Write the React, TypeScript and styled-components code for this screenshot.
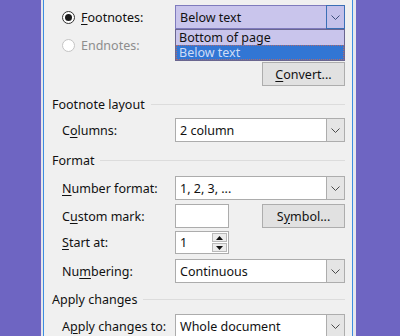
import React from 'react';
import styled, { createGlobalStyle } from 'styled-components';

const GlobalStyle = createGlobalStyle`
  html, body { margin: 0; padding: 0; }
  body {
    background: #6e65c2;
    font-family: 'Noto Sans', 'Open Sans', sans-serif;
    font-size: 12.5px;
    color: #111;
  }
`;

const Page = styled.div`
  width: 400px;
  height: 336px;
  overflow: hidden;
  background: #6e65c2;
  padding-left: 41px;
  box-sizing: border-box;
`;

const Frame = styled.div`
  width: 315px;
  height: 336px;
  box-sizing: border-box;
  background: #e6e6ec;
  padding: 0 3px 0 2px;
`;

const Body = styled.div`
  height: 100%;
  box-sizing: border-box;
  background: #f0f0f0;
  border-left: 1px solid #3d8ee0;
  border-right: 1px solid #3d8ee0;
  padding: 5px 7px 0 8px;
`;

const Row = styled.div<{ $h?: number; $mt?: number }>`
  display: grid;
  grid-template-columns: 113px 170px;
  align-items: center;
  height: ${(p) => p.$h ?? 24}px;
  margin-top: ${(p) => p.$mt ?? 0}px;
  padding-left: 10px;
`;

const Label = styled.span<{ $disabled?: boolean }>`
  white-space: nowrap;
  color: ${(p) => (p.$disabled ? '#8d8d8d' : '#111')};
  u { text-decoration: underline; text-underline-offset: 2px; }
`;

const RadioLabel = styled.label`
  display: flex;
  align-items: center;
  gap: 6px;
`;

const Radio = styled.span<{ $checked?: boolean; $disabled?: boolean }>`
  width: 13px;
  height: 13px;
  box-sizing: border-box;
  border-radius: 50%;
  background: #fff;
  border: 1px solid ${(p) => (p.$disabled ? '#c4c4c4' : '#333')};
  display: inline-flex;
  align-items: center;
  justify-content: center;
  &::after {
    content: '';
    display: ${(p) => (p.$checked ? 'block' : 'none')};
    width: 7px;
    height: 7px;
    border-radius: 50%;
    background: #1a1a1a;
  }
`;

const Heading = styled.div<{ $mt: number }>`
  display: flex;
  align-items: center;
  gap: 6px;
  height: 16px;
  margin-top: ${(p) => p.$mt}px;
  white-space: nowrap;
  &::after {
    content: '';
    flex: 1;
    height: 1px;
    background: #dcdcdc;
  }
`;

const SelectWrap = styled.div`
  position: relative;
  height: 100%;
`;

const SelectBox = styled.div<{ $focus?: boolean }>`
  display: flex;
  align-items: stretch;
  height: 100%;
  box-sizing: border-box;
  border: 1px solid ${(p) => (p.$focus ? '#7f7bbd' : '#acacac')};
  background: ${(p) => (p.$focus ? '#c9c5ec' : '#fff')};
`;

const SelectText = styled.span`
  flex: 1;
  display: flex;
  align-items: center;
  padding-left: 4px;
  white-space: nowrap;
`;

const ArrowButton = styled.span<{ $focus?: boolean }>`
  width: 19px;
  box-sizing: border-box;
  display: flex;
  align-items: center;
  justify-content: center;
  border: 1px solid ${(p) => (p.$focus ? '#3b6fb6' : '#adadad')};
  margin: -1px -1px -1px 0;
  background: ${(p) => (p.$focus ? '#c4c1ea' : '#e5e5e5')};
`;

const DropList = styled.div`
  position: absolute;
  top: 100%;
  left: 0;
  right: 0;
  box-sizing: border-box;
  border: 1px solid #6a6690;
  background: #c9c5ec;
  z-index: 2;
`;

const DropItem = styled.div<{ $selected?: boolean }>`
  height: 15px;
  line-height: 15px;
  padding-left: 3px;
  box-sizing: border-box;
  white-space: nowrap;
  background: ${(p) => (p.$selected ? '#3276d4' : 'transparent')};
  color: ${(p) => (p.$selected ? '#cfdcf6' : '#111')};
  outline: ${(p) => (p.$selected ? '1px dotted #b06a6a' : 'none')};
  outline-offset: -1px;
`;

const Button = styled.button`
  justify-self: end;
  width: 83px;
  height: 24px;
  margin-right: 0;
  box-sizing: border-box;
  border: 1px solid #adadad;
  background: #e1e1e1;
  font: inherit;
  color: #111;
  padding: 0;
  u { text-decoration: underline; text-underline-offset: 2px; }
`;

const ButtonRow = styled.div<{ $mt: number }>`
  display: flex;
  justify-content: flex-end;
  margin-top: ${(p) => p.$mt}px;
`;

const Controls = styled.div`
  display: flex;
  align-items: center;
  justify-content: space-between;
  height: 100%;
`;

const TextBox = styled.div`
  width: 54px;
  height: 100%;
  box-sizing: border-box;
  border: 1px solid #acacac;
  background: #fff;
  display: flex;
  align-items: center;
  padding-left: 4px;
`;

const SpinBox = styled(TextBox)`
  justify-content: space-between;
  padding: 1px 1px 1px 4px;
`;

const Spinner = styled.div`
  display: flex;
  flex-direction: column;
  width: 15px;
  height: 100%;
  gap: 1px;
`;

const SpinPart = styled.span`
  flex: 1;
  display: flex;
  align-items: center;
  justify-content: center;
  border: 1px solid #b9b9b9;
  background: #ececec;
`;

const Chevron = ({ color = '#4a4a4a' }: { color?: string }) => (
  <svg width="9" height="5" viewBox="0 0 9 5">
    <polyline points="0.5,0.5 4.5,4.5 8.5,0.5" fill="none" stroke={color} strokeWidth="1" />
  </svg>
);

const Tri = ({ up }: { up?: boolean }) => (
  <svg width="7" height="4" viewBox="0 0 7 4">
    <polygon points={up ? '0,4 7,4 3.5,0' : '0,0 7,0 3.5,4'} fill="#111" />
  </svg>
);

function Select({ value, focus, children }: { value: string; focus?: boolean; children?: React.ReactNode }) {
  return (
    <SelectWrap>
      <SelectBox $focus={focus}>
        <SelectText>{value}</SelectText>
        <ArrowButton $focus={focus}>
          <Chevron color={focus ? '#3c4f7a' : '#4a4a4a'} />
        </ArrowButton>
      </SelectBox>
      {children}
    </SelectWrap>
  );
}

export default function App() {
  return (
    <Page>
      <GlobalStyle />
      <Frame>
        <Body>
          <Row>
            <RadioLabel>
              <Radio $checked />
              <Label><u>F</u>ootnotes:</Label>
            </RadioLabel>
            <Select value="Below text" focus>
              <DropList>
                <DropItem>Bottom of page</DropItem>
                <DropItem $selected>Below text</DropItem>
              </DropList>
            </Select>
          </Row>
          <Row $mt={4}>
            <RadioLabel>
              <Radio $disabled />
              <Label $disabled>Endnotes:</Label>
            </RadioLabel>
          </Row>
          <ButtonRow $mt={5}>
            <Button><u>C</u>onvert...</Button>
          </ButtonRow>

          <Heading $mt={10}>Footnote layout</Heading>
          <Row $mt={6}>
            <Label>C<u>o</u>lumns:</Label>
            <Select value="2 column" />
          </Row>

          <Heading $mt={10}>Format</Heading>
          <Row $mt={8}>
            <Label><u>N</u>umber format:</Label>
            <Select value="1, 2, 3, ..." />
          </Row>
          <Row $mt={4}>
            <Label>C<u>u</u>stom mark:</Label>
            <Controls>
              <TextBox />
              <Button>S<u>y</u>mbol...</Button>
            </Controls>
          </Row>
          <Row $mt={3} $h={23}>
            <Label><u>S</u>tart at:</Label>
            <Controls>
              <SpinBox>
                1
                <Spinner>
                  <SpinPart><Tri up /></SpinPart>
                  <SpinPart><Tri /></SpinPart>
                </Spinner>
              </SpinBox>
            </Controls>
          </Row>
          <Row $mt={5}>
            <Label>Nu<u>m</u>bering:</Label>
            <Select value="Continuous" />
          </Row>

          <Heading $mt={8}>Apply changes</Heading>
          <Row $mt={7}>
            <Label>A<u>p</u>ply changes to:</Label>
            <Select value="Whole document" />
          </Row>
        </Body>
      </Frame>
    </Page>
  );
}
